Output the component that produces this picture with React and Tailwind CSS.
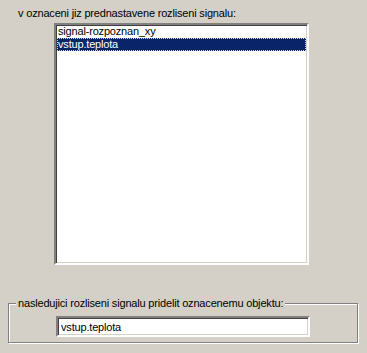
import { useState } from "react";

const items = ["signal-rozpoznan_xy", "vstup.teplota"];

export default function App() {
  const [selected, setSelected] = useState(1);
  const [value, setValue] = useState("vstup.teplota");

  return (
    <div className="w-[367px] h-[353px] bg-[#d4d0c8] text-black text-[11px] leading-[13px] tracking-[-0.18px] font-['Liberation_Sans',Arial,sans-serif] overflow-hidden">
      <div className="pt-[7px] pl-[18px]">v oznaceni jiz prednastavene rozliseni signalu:</div>

      <div className="ml-[54px] mt-[3px] w-[255px] h-[242px] bg-white border-2 border-t-[#808080] border-l-[#808080] border-b-white border-r-white">
        <div className="h-full shadow-[inset_1px_1px_0_#404040,inset_-1px_-1px_0_#d4d0c8]">
          {items.map((it, i) => (
            <div
              key={it}
              onClick={() => setSelected(i)}
              className={
                i === selected
                  ? "h-[13px] mx-px pl-[1px] bg-[#0a246a] text-white outline-1 outline-dotted outline-[#d4d0c8] -outline-offset-1"
                  : "h-[13px] mx-px pl-[1px]"
              }
            >
              {it}
            </div>
          ))}
        </div>
      </div>

      <fieldset className="ml-[8px] mt-[32px] w-[350px] border border-[#808080] shadow-[inset_1px_1px_0_#fff,1px_1px_0_#fff] pb-[5px]">
        <legend className="ml-[7px] px-[2px] leading-[13px] bg-[#d4d0c8]">nasledujici rozliseni signalu pridelit oznacenemu objektu:</legend>
        <input
          value={value}
          onChange={(e) => setValue(e.target.value)}
          className="block ml-[47px] mt-[6px] w-[254px] h-[21px] bg-white px-[3px] text-[11px] tracking-[-0.18px] border-2 border-t-[#808080] border-l-[#808080] border-b-white border-r-white shadow-[inset_1px_1px_0_#404040,inset_-1px_-1px_0_#d4d0c8] outline-none"
        />
      </fieldset>
    </div>
  );
}
